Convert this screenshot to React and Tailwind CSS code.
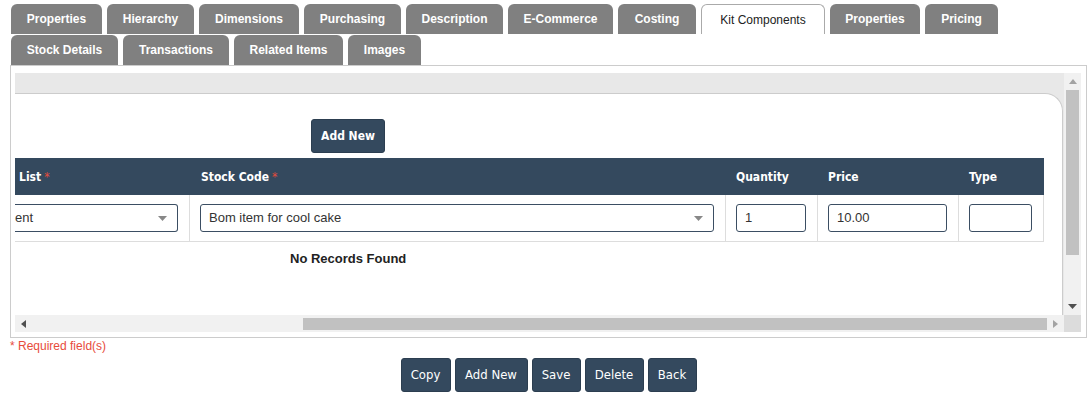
import React from 'react';

const rowOne = [
    ['Properties', 'w-[91px]'],
    ['Hierarchy', 'w-[87px]'],
    ['Dimensions', 'w-[100px]'],
    ['Purchasing', 'w-[97px]'],
    ['Description', 'w-[97px]'],
    ['E-Commerce', 'w-[105px]'],
    ['Costing', 'w-[78px]'],
    ['Kit Components', 'w-[124px]', true],
    ['Properties', 'w-[90px]'],
    ['Pricing', 'w-[73px]'],
];

const rowTwo = [
    ['Stock Details', 'w-[107px]'],
    ['Transactions', 'w-[106px]'],
    ['Related Items', 'w-[109px]'],
    ['Images', 'w-[73px]'],
];

const footerButtons = [
    ['Copy', 'w-[50px]'],
    ['Add New', 'w-[73px]'],
    ['Save', 'w-[49px]'],
    ['Delete', 'w-[59px]'],
    ['Back', 'w-[49px]'],
];

function Tab({ label, width, active }) {
    if (active) {
        return (
            <div className={`${width} h-[30px] rounded-t-[6px] border border-b-0 border-[#aaa] bg-white text-[#222] text-[12px] flex items-center justify-center`}>
                {label}
            </div>
        );
    }
    return (
        <div className={`${width} h-[30px] rounded-t-[6px] bg-[#808080] text-white font-bold text-[12px] flex items-center justify-center`}>
            {label}
        </div>
    );
}

function Caret({ color = '#888' }) {
    return (
        <svg width="9" height="5" viewBox="0 0 9 5">
            <path d="M0 0h9L4.5 5z" fill={color} />
        </svg>
    );
}

function Select({ value, className = '' }) {
    return (
        <div className={`h-[28px] border border-[#3b4e63] rounded-[3px] bg-white flex items-center justify-between pl-[8px] pr-[10px] text-[13px] text-[#333] whitespace-nowrap ${className}`}>
            <span>{value}</span>
            <Caret />
        </div>
    );
}

function TextBox({ value }) {
    return (
        <div className="h-[28px] w-full border border-[#3b4e63] rounded-[3px] bg-white flex items-center pl-[8px] text-[13px] text-[#333]">
            {value}
        </div>
    );
}

function Star() {
    return <span className="text-[#e74c3c] font-normal ml-[3px]">*</span>;
}

export default function App() {
    return (
        <div className="w-[1092px] h-[401px] bg-white overflow-hidden font-['Liberation_Sans',Arial,sans-serif]">
            {/* tabs */}
            <div className="pt-[4px] pl-[11px] flex flex-col gap-[1px]">
                <div className="flex gap-[5px]">
                    {rowOne.map(([label, w, active], i) => (
                        <Tab key={i} label={label} width={w} active={active} />
                    ))}
                </div>
                <div className="flex gap-[5px]">
                    {rowTwo.map(([label, w], i) => (
                        <Tab key={i} label={label} width={w} />
                    ))}
                </div>
            </div>

            {/* panel */}
            <div className="ml-[10px] w-[1077px] border border-[#ccc] pt-[7px] pl-[4px] pb-[5px] pr-[5px]">
                <div className="grid grid-cols-[1049px_17px] grid-rows-[242px_17px]">
                    {/* content area */}
                    <div className="bg-[#e8e8e8] flex flex-col overflow-hidden">
                        <div className="mt-[20px] mr-[1px] flex-1 bg-white border-t border-r border-[#ccc] rounded-tr-[18px] overflow-hidden">
                            <button className="ml-[296px] mt-[25px] w-[74px] h-[34px] rounded-[3px] bg-[#34495e] border border-[#2c3e50] text-white font-bold text-[12px] font-['DejaVu_Sans_Condensed','DejaVu_Sans',sans-serif] block">
                                Add New
                            </button>

                            <div className="mt-[5px] w-[1029px] font-['DejaVu_Sans_Condensed','DejaVu_Sans',sans-serif]">
                                <div className="grid grid-cols-[174px_536px_92px_141px_86px] h-[37px] bg-[#34495e] text-white font-bold text-[12px]">
                                    <div className="flex items-center pl-[4px] whitespace-nowrap">
                                        List
                                        <Star />
                                    </div>
                                    <div className="flex items-center pl-[12px]">
                                        Stock Code
                                        <Star />
                                    </div>
                                    <div className="flex items-center pl-[11px]">Quantity</div>
                                    <div className="flex items-center pl-[11px]">Price</div>
                                    <div className="flex items-center pl-[11px]">Type</div>
                                </div>
                                <div className="grid grid-cols-[174px_536px_92px_141px_86px] h-[47px] border-b border-[#ddd] font-['Liberation_Sans',Arial,sans-serif]">
                                    <div className="py-[9px] pr-[11px]">
                                        <Select value="ent" className="border-l-0 rounded-l-none !pl-0" />
                                    </div>
                                    <div className="border-l border-[#ddd] py-[9px] pl-[10px] pr-[11px]">
                                        <Select value="Bom item for cool cake" />
                                    </div>
                                    <div className="border-l border-[#ddd] py-[9px] pl-[10px] pr-[11px]">
                                        <TextBox value="1" />
                                    </div>
                                    <div className="border-l border-[#ddd] py-[9px] pl-[10px] pr-[11px]">
                                        <TextBox value="10.00" />
                                    </div>
                                    <div className="border-l border-r border-[#ddd] py-[9px] pl-[10px] pr-[11px]">
                                        <TextBox value="" />
                                    </div>
                                </div>
                                <div className="mt-[9px] ml-[275px] font-['Liberation_Sans',Arial,sans-serif] font-bold text-[13px] text-[#222] leading-[16px]">
                                    No Records Found
                                </div>
                            </div>
                        </div>
                    </div>

                    {/* vertical scrollbar */}
                    <div className="bg-[#f1f1f1] flex flex-col items-center">
                        <div className="h-[17px] flex items-center justify-center">
                            <svg width="8" height="5" viewBox="0 0 8 5"><path d="M0 5h8L4 0z" fill="#a3a3a3" /></svg>
                        </div>
                        <div className="w-[13px] h-[165px] bg-[#c1c1c1]" />
                        <div className="flex-1" />
                        <div className="h-[17px] flex items-center justify-center">
                            <Caret color="#505050" />
                        </div>
                    </div>

                    {/* horizontal scrollbar */}
                    <div className="bg-[#f1f1f1] flex items-center">
                        <div className="w-[17px] flex items-center justify-center">
                            <svg width="5" height="8" viewBox="0 0 5 8"><path d="M5 0v8L0 4z" fill="#505050" /></svg>
                        </div>
                        <div className="flex-1" />
                        <div className="w-[744px] h-[12px] bg-[#c1c1c1]" />
                        <div className="w-[17px] flex items-center justify-center">
                            <svg width="5" height="8" viewBox="0 0 5 8"><path d="M0 0v8L5 4z" fill="#a3a3a3" /></svg>
                        </div>
                    </div>
                    <div className="bg-[#dcdcdc]" />
                </div>
            </div>

            {/* footer */}
            <div className="mt-[1px] pl-[10px] text-[12px] leading-[14px] text-[#e74c3c]">* Required field(s)</div>
            <div className="mt-[5px] ml-[10px] w-[1077px] flex justify-center gap-[4px] font-['DejaVu_Sans_Condensed','DejaVu_Sans',sans-serif]">
                {footerButtons.map(([label, w]) => (
                    <button
                        key={label}
                        className={`${w} h-[34px] rounded-[3px] bg-[#34495e] border border-[#2c3e50] text-white text-[13px]`}
                    >
                        {label}
                    </button>
                ))}
            </div>
        </div>
    );
}
